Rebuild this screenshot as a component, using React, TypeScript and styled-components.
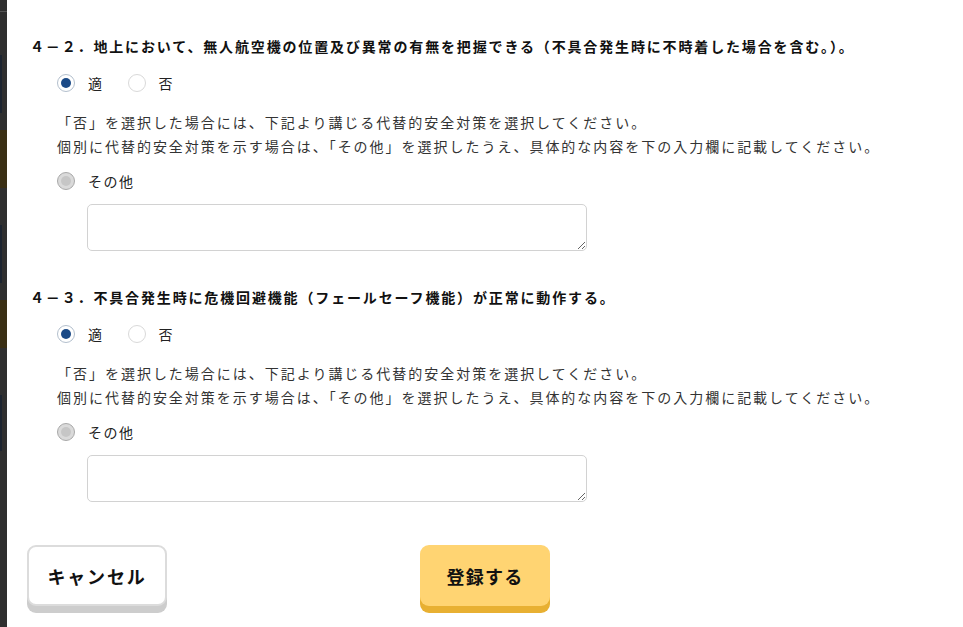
import React from "react";
import styled, { createGlobalStyle } from "styled-components";

const Global = createGlobalStyle`
  html, body { margin: 0; padding: 0; background: #fff; }
  body {
    font-family: "Noto Sans CJK JP", "Noto Sans", sans-serif;
    color: #222;
  }
  * { box-sizing: border-box; }
`;

const Page = styled.div`
  display: flex;
  width: 963px;
  height: 627px;
  overflow: hidden;
`;

const Backdrop = styled.div`
  flex: 0 0 7px;
  height: 627px;
  background:
    linear-gradient(#2f2f2f, #2f2f2f) 0 0 / 7px 11px no-repeat,
    linear-gradient(#555, #555) 0 11px / 7px 1px no-repeat,
    linear-gradient(#1c2430, #1c2430) 0 55px / 2px 58px no-repeat,
    linear-gradient(#1c2430, #1c2430) 0 225px / 2px 58px no-repeat,
    linear-gradient(#1c2430, #1c2430) 0 395px / 2px 56px no-repeat,
    linear-gradient(#3a2f14, #3a2f14) 0 130px / 7px 58px no-repeat,
    linear-gradient(#3a2f14, #3a2f14) 0 300px / 7px 48px no-repeat,
    #2f2f2f;
`;

const Modal = styled.div`
  flex: 1;
  display: flex;
  flex-direction: column;
  padding: 34px 0 0 0;
`;

const Section = styled.section<{ $gap?: number }>`
  display: flex;
  flex-direction: column;
  padding-left: 23px;
  margin-top: ${(p) => p.$gap ?? 0}px;
`;

const Heading = styled.h2`
  margin: 0;
  font-size: 14px;
  font-weight: 700;
  line-height: 24px;
  letter-spacing: 1.85px;
  color: #111;
  white-space: nowrap;
`;

const Body = styled.div`
  display: flex;
  flex-direction: column;
  padding-left: 27px;
`;

const RadioRow = styled.div<{ $mt: number }>`
  display: flex;
  align-items: center;
  gap: 24px;
  height: 24px;
  margin-top: ${(p) => p.$mt}px;
`;

const Option = styled.label`
  display: flex;
  align-items: center;
  gap: 13px;
  font-size: 14px;
  line-height: 24px;
  color: #222;
  letter-spacing: 1.5px;
`;

const Circle = styled.span<{ $state: "on" | "off" | "disabled" }>`
  position: relative;
  width: 18px;
  height: 18px;
  border-radius: 50%;
  border: 1px solid
    ${(p) =>
      p.$state === "on" ? "#b3bfcd" : p.$state === "off" ? "#d9d9d9" : "#a9a9a9"};
  background: ${(p) => (p.$state === "disabled" ? "#dadada" : "#fff")};
  flex: 0 0 18px;
  &::after {
    content: "";
    display: ${(p) => (p.$state === "off" ? "none" : "block")};
    position: absolute;
    left: 3px;
    top: 3px;
    width: 10px;
    height: 10px;
    border-radius: 50%;
    background: ${(p) => (p.$state === "on" ? "#1b4a87" : "#c6c6c6")};
  }
`;

const Note = styled.p`
  margin: 15px 0 0 0;
  font-size: 14px;
  line-height: 24px;
  letter-spacing: 1.98px;
  color: #333;
  white-space: nowrap;
`;

const TextArea = styled.textarea`
  display: block;
  margin: 11px 0 0 30px;
  width: 500px;
  height: 47px;
  border: 1px solid #d2d2d2;
  border-radius: 5px;
  font-family: inherit;
  font-size: 14px;
  padding: 6px 8px;
  outline: none;
  resize: both;
`;

const Footer = styled.div`
  display: grid;
  grid-template-columns: 1fr auto 1fr;
  align-items: start;
  margin-top: 43px;
  padding-left: 20px;
  padding-right: 20px;
`;

const Button = styled.button<{ $primary?: boolean }>`
  height: 61px;
  width: ${(p) => (p.$primary ? 130 : 140)}px;
  border-radius: 9px;
  border: ${(p) => (p.$primary ? "none" : "2px solid #dcdcdc")};
  background: ${(p) => (p.$primary ? "#ffd472" : "#fff")};
  box-shadow: 0 7px 0 ${(p) => (p.$primary ? "#e8b032" : "#cdcdcd")};
  font-family: "Noto Sans CJK JP", "Noto Sans", sans-serif;
  font-size: 18px;
  font-weight: 700;
  letter-spacing: ${(p) => (p.$primary ? 1.3 : 1.8)}px;
  color: #111;
  cursor: pointer;
  padding: 0;
`;

const Left = styled.div`
  justify-self: start;
`;

type Item = { heading: string; topGap: number };

const items: Item[] = [
  {
    heading:
      "４－２．地上において、無人航空機の位置及び異常の有無を把握できる（不具合発生時に不時着した場合を含む。）。",
    topGap: 0,
  },
  {
    heading: "４－３．不具合発生時に危機回避機能（フェールセーフ機能）が正常に動作する。",
    topGap: 34,
  },
];

function Question({ item }: { item: Item }) {
  return (
    <Section $gap={item.topGap}>
      <Heading>{item.heading}</Heading>
      <Body>
        <RadioRow $mt={13}>
          <Option>
            <Circle $state="on" />
            適
          </Option>
          <Option>
            <Circle $state="off" />
            否
          </Option>
        </RadioRow>
        <Note>
          「否」を選択した場合には、下記より講じる代替的安全対策を選択してください。
          <br />
          個別に代替的安全対策を示す場合は、「その他」を選択したうえ、具体的な内容を下の入力欄に記載してください。
        </Note>
        <RadioRow $mt={11}>
          <Option>
            <Circle $state="disabled" />
            その他
          </Option>
        </RadioRow>
        <TextArea />
      </Body>
    </Section>
  );
}

export default function App() {
  return (
    <>
      <Global />
      <Page>
        <Backdrop />
        <Modal>
          {items.map((it, i) => (
            <Question key={i} item={it} />
          ))}
          <Footer>
            <Left>
              <Button>キャンセル</Button>
            </Left>
            <Button $primary>登録する</Button>
            <div />
          </Footer>
        </Modal>
      </Page>
    </>
  );
}
